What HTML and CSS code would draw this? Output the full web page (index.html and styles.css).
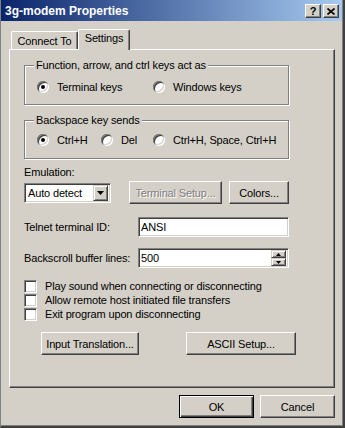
FILE: index.html
```html
<!DOCTYPE html>
<html>
<head>
<meta charset="utf-8">
<link rel="stylesheet" href="styles.css">
</head>
<body>
<div class="window">
  <div class="titlebar">
    <span class="title">3g-modem Properties</span>
    <div class="tbtns">
      <span class="tbtn help">?</span>
      <span class="tbtn close"><svg width="8" height="7" viewBox="0 0 8 7"><path d="M0.5 0.5L7.5 6.5M7.5 0.5L0.5 6.5" stroke="#000" stroke-width="1.6"/></svg></span>
    </div>
  </div>
  <div class="body">
    <div class="tabs">
      <div class="tab">Connect To</div>
      <div class="tab active">Settings</div>
    </div>
    <div class="panel">
      <div class="group g1">
        <span class="gtitle">Function, arrow, and ctrl keys act as</span>
        <div class="radios r1">
          <label class="opt"><span class="radio checked"></span>Terminal keys</label>
          <label class="opt"><span class="radio"></span>Windows keys</label>
        </div>
      </div>
      <div class="group g2">
        <span class="gtitle">Backspace key sends</span>
        <div class="radios r2">
          <label class="opt"><span class="radio checked"></span>Ctrl+H</label>
          <label class="opt"><span class="radio"></span>Del</label>
          <label class="opt"><span class="radio"></span>Ctrl+H, Space, Ctrl+H</label>
        </div>
      </div>
      <div class="emlabel">Emulation:</div>
      <div class="emrow">
        <div class="combo">
          <span class="combotext">Auto detect</span>
          <span class="combobtn"><svg width="7" height="4" viewBox="0 0 7 4"><path d="M0 0H7L3.5 4Z" fill="#000"/></svg></span>
        </div>
        <button class="btn disabled tsetup">Terminal Setup...</button>
        <button class="btn colors">Colors...</button>
      </div>
      <div class="field f1">
        <span class="flabel">Telnet terminal ID:</span>
        <div class="textbox">ANSI</div>
      </div>
      <div class="field f2">
        <span class="flabel">Backscroll buffer lines:</span>
        <div class="textbox spinbox">
          <span class="spintext">500</span>
          <span class="spin">
            <span class="spinbtn"><svg width="5" height="3" viewBox="0 0 5 3"><path d="M2.5 0L5 3H0Z" fill="#000"/></svg></span>
            <span class="spinbtn"><svg width="5" height="3" viewBox="0 0 5 3"><path d="M0 0H5L2.5 3Z" fill="#000"/></svg></span>
          </span>
        </div>
      </div>
      <div class="checks">
        <label class="check"><span class="cbox"></span>Play sound when connecting or disconnecting</label>
        <label class="check"><span class="cbox"></span>Allow remote host initiated file transfers</label>
        <label class="check"><span class="cbox"></span>Exit program upon disconnecting</label>
      </div>
      <div class="btnrow">
        <button class="btn itrans">Input Translation...</button>
        <button class="btn ascii">ASCII Setup...</button>
      </div>
    </div>
    <div class="actions">
      <button class="btn default dlg">OK</button>
      <button class="btn dlg">Cancel</button>
    </div>
  </div>
</div>
</body>
</html>
```
FILE: styles.css
```css
* { box-sizing: border-box; }
body {
  margin: 0;
  background: #d4d0c8;
  font-family: "Liberation Sans", Arial, sans-serif;
  font-size: 11px;
  letter-spacing: -0.15px;
  color: #000;
}
.window {
  width: 345px;
  height: 428px;
  background: #d4d0c8;
  border-left: 1px solid #808080;
  border-right: 2px solid #404040;
  border-bottom: 2px solid #404040;
  box-shadow: inset -1px -1px 0 #808080;
  overflow: hidden;
}
.titlebar {
  height: 21px;
  margin-right: 1px;
  background: linear-gradient(to right, #0a246a, #a6caf0);
  display: flex;
  align-items: center;
  justify-content: space-between;
  padding: 1px 3px 0 4px;
  color: #fff;
  font-weight: bold;
  font-size: 12px;
  letter-spacing: 0;
}
.tbtns { display: flex; gap: 2px; }
.tbtn {
  width: 16px;
  height: 14px;
  background: #d4d0c8;
  border: 1px solid;
  border-color: #fff #404040 #404040 #fff;
  box-shadow: inset -1px -1px 0 #808080;
  display: flex;
  align-items: center;
  justify-content: center;
  color: #000;
  font-size: 11px;
  font-weight: bold;
  line-height: 1;
}
.body { padding: 0 8px; }
.tabs {
  display: flex;
  align-items: flex-end;
  margin-top: 8px;
  margin-bottom: -1px;
  padding-left: 2px;
  height: 21px;
}
.tab {
  position: relative;
  height: 18px;
  margin-bottom: 1px;
  background: #d4d0c8;
  border-top: 1px solid #fff;
  border-left: 1px solid #fff;
  border-right: 1px solid #404040;
  box-shadow: inset -1px 0 0 #808080;
  border-radius: 2px 2px 0 0;
  text-align: center;
  line-height: 13px;
  padding-top: 3px;
  width: 67px;
}
.tab.active {
  height: 21px;
  margin-bottom: 0;
  width: 52px;
  padding-top: 2px;
  z-index: 1;
}
.panel {
  width: 326px;
  border: 1px solid;
  border-color: #fff #404040 #404040 #fff;
  box-shadow: inset -1px -1px 0 #808080;
  padding: 15px 0 32px 14px;
}
.group {
  width: 265px;
  border: 1px solid #808080;
  box-shadow: inset 1px 1px 0 #fff, 1px 1px 0 #fff;
  padding-left: 12px;
}
.g1 { padding-bottom: 11px; }
.g2 { margin-top: 15px; padding-bottom: 12px; }
.gtitle {
  display: block;
  width: fit-content;
  margin: -7px 0 0 -3px;
  padding: 0 2px;
  background: #d4d0c8;
  line-height: 13px;
}
.radios {
  display: grid;
  align-items: center;
  height: 13px;
}
.r1 { grid-template-columns: 116px auto; margin-top: 8px; }
.r2 { grid-template-columns: 64px 52px auto; margin-top: 6px; }
.opt { display: flex; align-items: center; gap: 8px; white-space: nowrap; }
.radio {
  width: 12px;
  height: 12px;
  border-radius: 50%;
  background: #fff;
  box-shadow: inset 1px 1px 0 #808080, inset -1px -1px 0 #fff, inset 2px 2px 0 #404040, inset -2px -2px 0 #d4d0c8;
  display: grid;
  place-items: center;
  flex: none;
}
.radio.checked::after {
  content: "";
  width: 4px;
  height: 4px;
  border-radius: 50%;
  background: #000;
}
.emlabel { margin-top: 7px; line-height: 13px; }
.emrow {
  display: flex;
  align-items: center;
  height: 23px;
  margin-top: 2px;
}
.combo {
  width: 87px;
  height: 20px;
  margin-right: 18px;
  background: #fff;
  border: 1px solid;
  border-color: #808080 #fff #fff #808080;
  box-shadow: inset 1px 1px 0 #404040, inset -1px -1px 0 #d4d0c8;
  display: flex;
  align-items: center;
  justify-content: space-between;
  padding: 2px 2px 2px 3px;
}
.combobtn {
  width: 15px;
  height: 16px;
  background: #d4d0c8;
  border: 1px solid;
  border-color: #d4d0c8 #404040 #404040 #d4d0c8;
  box-shadow: inset 1px 1px 0 #fff, inset -1px -1px 0 #808080;
  display: flex;
  align-items: center;
  justify-content: center;
}
.btn {
  font: inherit;
  letter-spacing: inherit;
  color: #000;
  height: 23px;
  padding: 0;
  background: #d4d0c8;
  border: 1px solid;
  border-color: #fff #404040 #404040 #fff;
  box-shadow: inset -1px -1px 0 #808080, inset 1px 1px 0 #d4d0c8;
  text-align: center;
}
.btn.disabled { color: #808080; text-shadow: 1px 1px 0 #fff; }
.tsetup { width: 93px; margin-right: 7px; }
.colors { width: 60px; }
.field { display: flex; align-items: center; }
.f1 { margin-top: 13px; }
.f2 { margin-top: 11px; }
.flabel { width: 114px; }
.textbox {
  width: 151px;
  height: 20px;
  background: #fff;
  border: 1px solid;
  border-color: #808080 #fff #fff #808080;
  box-shadow: inset 1px 1px 0 #404040, inset -1px -1px 0 #d4d0c8;
  padding: 0 2px 0 2px;
  line-height: 18px;
}
.spinbox { display: flex; justify-content: space-between; align-items: center; }
.spin { display: flex; flex-direction: column; margin-right: 0; }
.spinbtn {
  width: 15px;
  height: 8px;
  background: #d4d0c8;
  border: 1px solid;
  border-color: #d4d0c8 #404040 #404040 #d4d0c8;
  box-shadow: inset 1px 1px 0 #fff, inset -1px -1px 0 #808080;
  display: flex;
  align-items: center;
  justify-content: center;
}
.checks { margin-top: 11px; }
.check { display: flex; align-items: center; gap: 8px; height: 14px; }
.cbox {
  width: 13px;
  height: 13px;
  background: #fff;
  border: 1px solid;
  border-color: #808080 #fff #fff #808080;
  box-shadow: inset 1px 1px 0 #404040, inset -1px -1px 0 #d4d0c8;
  flex: none;
}
.btnrow { display: flex; margin-top: 11px; padding-left: 17px; gap: 47px; }
.itrans { width: 98px; }
.ascii { width: 110px; }
.actions {
  display: flex;
  justify-content: flex-end;
  gap: 6px;
  margin-top: 7px;
  width: 326px;
}
.dlg { width: 75px; }
.btn.default {
  border: 1px solid #000;
  box-shadow: inset 1px 1px 0 #fff, inset -1px -1px 0 #404040, inset -2px -2px 0 #808080;
}
```
